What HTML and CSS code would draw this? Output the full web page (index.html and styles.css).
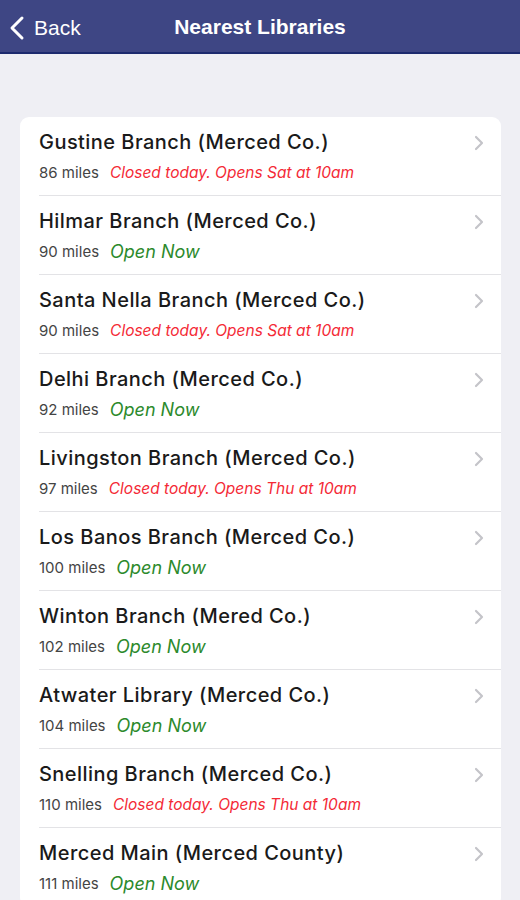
FILE: index.html
```html
<!DOCTYPE html>
<html lang="en">
<head>
    <meta charset="UTF-8">
    <title>Nearest Libraries</title>
    <link rel="stylesheet" href="styles.css">
</head>
<body>
    <div class="navbar">
        <a class="back" href="#">
            <svg width="16" height="26" viewBox="0 0 16 26"><path d="M13 3 L3 13 L13 23" fill="none" stroke="#fff" stroke-width="3" stroke-linecap="round" stroke-linejoin="round"/></svg>
            <span>Back</span>
        </a>
        <div class="title">Nearest Libraries</div>
    </div>
    <div class="list">
        <div class="row">
            <div class="info">
                <div class="name">Gustine Branch (Merced Co.)</div>
                <div class="sub"><span class="miles">86 miles</span><span class="closed">Closed today. Opens Sat at 10am</span></div>
            </div>
            <svg class="chev" width="10" height="16" viewBox="0 0 10 16"><path d="M2 2 L8 8 L2 14" fill="none" stroke="#c4c4c9" stroke-width="2.2" stroke-linecap="round" stroke-linejoin="round"/></svg>
        </div>
        <div class="row">
            <div class="info">
                <div class="name">Hilmar Branch (Merced Co.)</div>
                <div class="sub"><span class="miles">90 miles</span><span class="open">Open Now</span></div>
            </div>
            <svg class="chev" width="10" height="16" viewBox="0 0 10 16"><path d="M2 2 L8 8 L2 14" fill="none" stroke="#c4c4c9" stroke-width="2.2" stroke-linecap="round" stroke-linejoin="round"/></svg>
        </div>
        <div class="row">
            <div class="info">
                <div class="name">Santa Nella Branch (Merced Co.)</div>
                <div class="sub"><span class="miles">90 miles</span><span class="closed">Closed today. Opens Sat at 10am</span></div>
            </div>
            <svg class="chev" width="10" height="16" viewBox="0 0 10 16"><path d="M2 2 L8 8 L2 14" fill="none" stroke="#c4c4c9" stroke-width="2.2" stroke-linecap="round" stroke-linejoin="round"/></svg>
        </div>
        <div class="row">
            <div class="info">
                <div class="name">Delhi Branch (Merced Co.)</div>
                <div class="sub"><span class="miles">92 miles</span><span class="open">Open Now</span></div>
            </div>
            <svg class="chev" width="10" height="16" viewBox="0 0 10 16"><path d="M2 2 L8 8 L2 14" fill="none" stroke="#c4c4c9" stroke-width="2.2" stroke-linecap="round" stroke-linejoin="round"/></svg>
        </div>
        <div class="row">
            <div class="info">
                <div class="name">Livingston Branch (Merced Co.)</div>
                <div class="sub"><span class="miles">97 miles</span><span class="closed">Closed today. Opens Thu at 10am</span></div>
            </div>
            <svg class="chev" width="10" height="16" viewBox="0 0 10 16"><path d="M2 2 L8 8 L2 14" fill="none" stroke="#c4c4c9" stroke-width="2.2" stroke-linecap="round" stroke-linejoin="round"/></svg>
        </div>
        <div class="row">
            <div class="info">
                <div class="name">Los Banos Branch (Merced Co.)</div>
                <div class="sub"><span class="miles">100 miles</span><span class="open">Open Now</span></div>
            </div>
            <svg class="chev" width="10" height="16" viewBox="0 0 10 16"><path d="M2 2 L8 8 L2 14" fill="none" stroke="#c4c4c9" stroke-width="2.2" stroke-linecap="round" stroke-linejoin="round"/></svg>
        </div>
        <div class="row">
            <div class="info">
                <div class="name">Winton Branch (Mered Co.)</div>
                <div class="sub"><span class="miles">102 miles</span><span class="open">Open Now</span></div>
            </div>
            <svg class="chev" width="10" height="16" viewBox="0 0 10 16"><path d="M2 2 L8 8 L2 14" fill="none" stroke="#c4c4c9" stroke-width="2.2" stroke-linecap="round" stroke-linejoin="round"/></svg>
        </div>
        <div class="row">
            <div class="info">
                <div class="name">Atwater Library (Merced Co.)</div>
                <div class="sub"><span class="miles">104 miles</span><span class="open">Open Now</span></div>
            </div>
            <svg class="chev" width="10" height="16" viewBox="0 0 10 16"><path d="M2 2 L8 8 L2 14" fill="none" stroke="#c4c4c9" stroke-width="2.2" stroke-linecap="round" stroke-linejoin="round"/></svg>
        </div>
        <div class="row">
            <div class="info">
                <div class="name">Snelling Branch (Merced Co.)</div>
                <div class="sub"><span class="miles">110 miles</span><span class="closed">Closed today. Opens Thu at 10am</span></div>
            </div>
            <svg class="chev" width="10" height="16" viewBox="0 0 10 16"><path d="M2 2 L8 8 L2 14" fill="none" stroke="#c4c4c9" stroke-width="2.2" stroke-linecap="round" stroke-linejoin="round"/></svg>
        </div>
        <div class="row">
            <div class="info">
                <div class="name">Merced Main (Merced County)</div>
                <div class="sub"><span class="miles">111 miles</span><span class="open">Open Now</span></div>
            </div>
            <svg class="chev" width="10" height="16" viewBox="0 0 10 16"><path d="M2 2 L8 8 L2 14" fill="none" stroke="#c4c4c9" stroke-width="2.2" stroke-linecap="round" stroke-linejoin="round"/></svg>
        </div>
    </div>
</body>
</html>
```

FILE: styles.css
```css
body {
    margin: 0;
    background: #efeff4;
    font-family: Inter, 'Liberation Sans', Arial, sans-serif;
    color: #1a1a1a;
}
.navbar {
    height: 52px;
    background: #3e4684;
    border-bottom: 2px solid #1d2a6e;
    display: flex;
    align-items: center;
    justify-content: center;
    position: relative;
    font-family: 'Liberation Sans', Arial, sans-serif;
}
.back {
    position: absolute;
    left: 9px;
    top: 15px;
    display: flex;
    align-items: center;
    gap: 9px;
    color: #fff;
    text-decoration: none;
    font-size: 21px;
}
.title {
    color: #fff;
    font-size: 21px;
    font-weight: bold;
    margin-top: 2px;
}
.list {
    background: #fff;
    margin: 63px 19px 0 20px;
    border-radius: 9px;
    overflow: hidden;
}
.row {
    display: flex;
    align-items: center;
    margin-left: 19px;
    padding: 13px 17px 12px 0;
    border-bottom: 1px solid #e3e3e6;
}
.info {
    flex: 1;
}
.name {
    font-size: 20px;
    line-height: 24px;
    font-weight: 500;
    letter-spacing: 0.45px;
}
.sub {
    margin-top: 7px;
    height: 22px;
    display: flex;
    align-items: center;
    gap: 11px;
}
.miles {
    font-size: 15px;
    color: #444;
}
.closed {
    font-size: 15.5px;
    font-style: italic;
    color: #f42a36;
}
.open {
    font-size: 18px;
    font-style: italic;
    color: #2c8a2c;
}
.chev {
    margin-top: -28px;
}
```
